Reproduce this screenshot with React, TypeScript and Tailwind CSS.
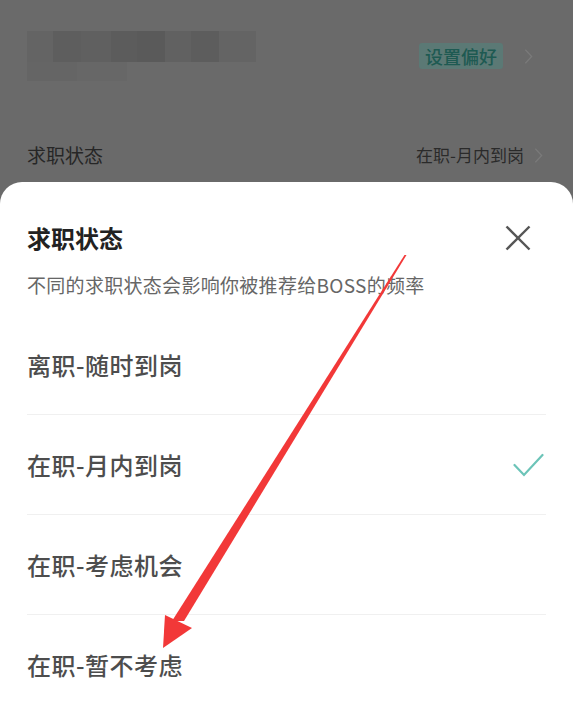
const options = [
  { id: 1, label: "离职-随时到岗", selected: false },
  { id: 2, label: "在职-月内到岗", selected: true },
  { id: 3, label: "在职-考虑机会", selected: false },
  { id: 4, label: "在职-暂不考虑", selected: false },
];

const font = "font-['Noto_Sans_CJK_SC','Noto_Sans',sans-serif]";

function Chevron({ className }: { className?: string }) {
  return (
    <svg viewBox="0 0 10 18" className={className} fill="none" stroke="currentColor" strokeWidth="1.4">
      <polyline points="1.5,1.5 8.5,9 1.5,16.5" />
    </svg>
  );
}

export default function App() {
  return (
    <div className={`relative flex h-[708px] w-[573px] flex-col overflow-hidden bg-[#6a6a6a] ${font}`}>
      {/* Dimmed page behind the sheet */}
      <div className="flex h-[182px] shrink-0 flex-col px-[27px]">
        <div className="flex h-[112px] shrink-0 items-center justify-between">
          <div className="flex flex-col">
            <div className="flex h-[31px] w-[229px]">
              <div className="w-[26px] bg-[#646464]" />
              <div className="w-[28px] bg-[#5e5e5e]" />
              <div className="w-[30px] bg-[#606060]" />
              <div className="w-[26px] bg-[#5c5c5c]" />
              <div className="w-[28px] bg-[#5a5a5a]" />
              <div className="w-[26px] bg-[#616161]" />
              <div className="w-[28px] bg-[#5d5d5d]" />
              <div className="w-[37px] bg-[#646464]" />
            </div>
            <div className="flex h-[19px] w-[100px]">
              <div className="w-[50px] bg-[#656565]" />
              <div className="w-[50px] bg-[#676767]" />
            </div>
          </div>
          <div className="flex items-center gap-[21px] pr-[13px]">
            <span className="rounded-[3px] bg-[#5b7975] px-[6px] py-[2px] text-[18px] font-medium leading-[22px] text-[#1e5a52]">
              设置偏好
            </span>
            <Chevron className="h-[17px] w-[9px] text-[#7a7a7a]" />
          </div>
        </div>
        <div className="flex items-start justify-between pt-[32px]">
          <span className="text-[19px] leading-[22px] text-[#262626]">求职状态</span>
          <div className="flex items-center gap-[10px] pr-[3px]">
            <span className="text-[17px] leading-[22px] text-[#2a2a2a]">在职-月内到岗</span>
            <Chevron className="h-[17px] w-[9px] text-[#7a7a7a]" />
          </div>
        </div>
      </div>

      {/* Bottom sheet */}
      <div className="flex flex-1 flex-col rounded-t-[22px] bg-white px-[27px] pt-[40px]">
        <div className="flex items-center justify-between">
          <h2 className="text-[24px] font-bold leading-[32px] text-[#222]">求职状态</h2>
          <svg viewBox="0 0 26 26" className="mr-[15px] h-[26px] w-[26px] text-[#555]" fill="none" stroke="currentColor" strokeWidth="2.4">
            <line x1="1.5" y1="1.5" x2="24.5" y2="24.5" />
            <line x1="24.5" y1="1.5" x2="1.5" y2="24.5" />
          </svg>
        </div>
        <p className="mt-[18px] text-[19px] leading-[26px] tracking-[0.3px] text-[#666]">不同的求职状态会影响你被推荐给BOSS的频率</p>

        <div className="mt-[17px] flex flex-col">
          {options.map((o, i) => (
            <div
              key={o.id}
              className={`flex h-[100px] shrink-0 items-center justify-between ${i < options.length - 1 ? "border-b border-[#f0f0f0]" : ""}`}
            >
              <span className="text-[24px] font-medium leading-[30px] tracking-[0.5px] text-[#4d4d4d]">{o.label}</span>
              {o.selected && (
                <svg viewBox="0 0 31 24" className="mr-[2px] h-[24px] w-[31px] text-[#6cc4b8]" fill="none" stroke="currentColor" strokeWidth="2.2" strokeLinecap="round">
                  <polyline points="1.5,12 11,22 29.5,2" />
                </svg>
              )}
            </div>
          ))}
        </div>
      </div>

      {/* Red annotation arrow */}
      <svg className="pointer-events-none absolute left-0 top-0" width="573" height="708" viewBox="0 0 573 708">
        <polygon points="404.5,255 406.5,255 184,621 172,621" fill="#f23838" />
        <polygon points="163,648 165,615 192,628" fill="#f23838" />
      </svg>
    </div>
  );
}
